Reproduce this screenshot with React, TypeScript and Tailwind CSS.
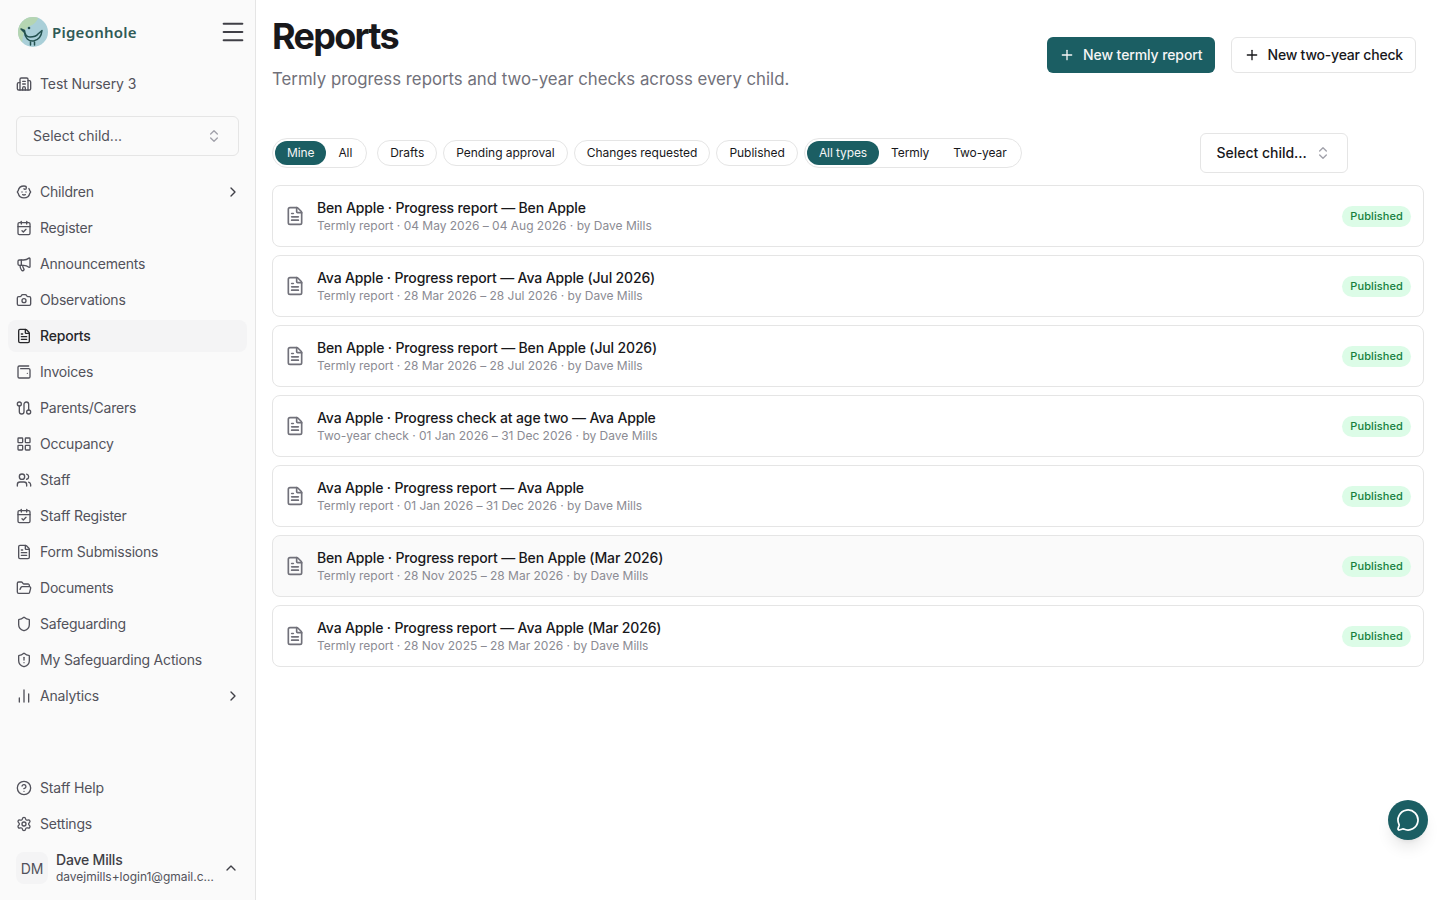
import {
  Baby,
  Building2,
  CalendarCheck,
  ChartNoAxesColumn,
  ChevronRight,
  ChevronUp,
  ChevronsUpDown,
  CircleHelp,
  FileText,
  FolderOpen,
  LayoutGrid,
  Camera,
  Megaphone,
  Menu,
  MessageCircle,
  Plus,
  Route,
  Settings,
  Shield,
  ShieldAlert,
  Users,
  WalletMinimal,
} from "lucide-react";

const navItems = [
  { label: "Children", icon: Baby, arrow: true },
  { label: "Register", icon: CalendarCheck },
  { label: "Announcements", icon: Megaphone },
  { label: "Observations", icon: Camera },
  { label: "Reports", icon: FileText, active: true },
  { label: "Invoices", icon: WalletMinimal },
  { label: "Parents/Carers", icon: Route, turned: true },
  { label: "Occupancy", icon: LayoutGrid },
  { label: "Staff", icon: Users },
  { label: "Staff Register", icon: CalendarCheck },
  { label: "Form Submissions", icon: FileText },
  { label: "Documents", icon: FolderOpen },
  { label: "Safeguarding", icon: Shield },
  { label: "My Safeguarding Actions", icon: ShieldAlert },
  { label: "Analytics", icon: ChartNoAxesColumn, arrow: true },
];

const reports = [
  { title: "Ben Apple · Progress report — Ben Apple", meta: "Termly report · 04 May 2026 – 04 Aug 2026 · by Dave Mills" },
  { title: "Ava Apple · Progress report — Ava Apple (Jul 2026)", meta: "Termly report · 28 Mar 2026 – 28 Jul 2026 · by Dave Mills" },
  { title: "Ben Apple · Progress report — Ben Apple (Jul 2026)", meta: "Termly report · 28 Mar 2026 – 28 Jul 2026 · by Dave Mills" },
  { title: "Ava Apple · Progress check at age two — Ava Apple", meta: "Two-year check · 01 Jan 2026 – 31 Dec 2026 · by Dave Mills" },
  { title: "Ava Apple · Progress report — Ava Apple", meta: "Termly report · 01 Jan 2026 – 31 Dec 2026 · by Dave Mills" },
  { title: "Ben Apple · Progress report — Ben Apple (Mar 2026)", meta: "Termly report · 28 Nov 2025 – 28 Mar 2026 · by Dave Mills", hover: true },
  { title: "Ava Apple · Progress report — Ava Apple (Mar 2026)", meta: "Termly report · 28 Nov 2025 – 28 Mar 2026 · by Dave Mills" },
];

function PigeonLogo() {
  return (
    <svg viewBox="0 0 32 32" className="h-[32px] w-[32px] shrink-0">
      <defs>
        <clipPath id="logo-clip">
          <circle cx="16" cy="16" r="15" />
        </clipPath>
      </defs>
      <circle cx="16" cy="16" r="15" fill="#a9cfd8" />
      <g clipPath="url(#logo-clip)">
        <path d="M0 0h22c-2 5-4 8-9 10S5 18 5 32H0z" fill="#b5d5b2" />
      </g>
      <path
        d="M4 13l3.500 1.500c.5 4 2 6.500 5.500 6.500 4 0 6.500-1 8-3l4-3.500c-.5 5-3.500 9.500-8.500 10.500-5 .5-8.500-3-9-8.500z"
        fill="none"
        stroke="#23514f"
        strokeWidth="1.500"
        strokeLinejoin="round"
      />
      <circle cx="12" cy="12" r="1.300" fill="#23514f" />
      <path d="M13.500 26v3M17.500 26v3" stroke="#23514f" strokeWidth="1.500" strokeLinecap="round" />
    </svg>
  );
}

function Sidebar() {
  return (
    <aside className="flex h-screen w-[256px] shrink-0 flex-col border-r border-[#e5e5e5] bg-[#fafafa] text-[#52525b]">
      <div className="flex h-[64px] items-center justify-between pr-[8px] pl-[17px]">
        <div className="flex items-center gap-[3px]">
          <PigeonLogo />
          <span className="font-['Noto_Sans',sans-serif] text-[15px] font-semibold tracking-[0.25px] text-[#2f5a56]">Pigeonhole</span>
        </div>
        <Menu className="h-[28px] w-[28px] text-[#3f3f46]" strokeWidth={1.75} />
      </div>
      <div className="flex h-[40px] items-center gap-[8px] px-[16px] tracking-[-0.1px]">
        <Building2 className="h-[16px] w-[16px]" />
        <span className="pb-[2px] text-[14px]">Test Nursery 3</span>
      </div>
      <div className="mx-[16px] mt-[12px] flex h-[40px] items-center justify-between rounded-[6px] border border-[#e5e5e5] px-[16px] text-[14px]">
        <span className="pb-[2px]">Select child...</span>
        <ChevronsUpDown className="h-[16px] w-[16px] text-[#a1a1aa]" />
      </div>
      <nav className="mt-[20px] flex flex-col px-[8px]">
        {navItems.map((item) => {
          const Icon = item.icon;
          return (
            <div
              key={item.label}
              className={`flex h-[32px] items-center gap-[8px] rounded-[8px] pr-[6px] pl-[8px] text-[14px] tracking-[-0.2px] [&:not(:last-child)]:mb-[4px] ${
                item.active ? "bg-[#f4f4f5] font-medium text-[#27272a]" : ""
              }`}
            >
              <Icon className={`h-[16px] w-[16px] shrink-0 ${item.turned ? "rotate-90" : ""}`} />
              <span className="flex-1 pb-[2px]">{item.label}</span>
              {item.arrow && <ChevronRight className="h-[16px] w-[16px] text-[#3f3f46]" />}
            </div>
          );
        })}
      </nav>
      <div className="mt-auto flex flex-col gap-[4px] px-[8px] tracking-[-0.2px]">
        <div className="flex h-[32px] items-center gap-[8px] px-[8px] text-[14px]">
          <CircleHelp className="h-[16px] w-[16px]" />
          <span className="pb-[2px]">Staff Help</span>
        </div>
        <div className="flex h-[32px] items-center gap-[8px] px-[8px] text-[14px]">
          <Settings className="h-[16px] w-[16px]" />
          <span className="pb-[2px]">Settings</span>
        </div>
      </div>
      <div className="mt-[12px] mb-[16px] flex h-[32px] items-center pr-[16px] pl-[16px]">
        <div className="flex h-[32px] w-[32px] shrink-0 items-center justify-center rounded-[8px] bg-[#f4f4f5] text-[14px]">DM</div>
        <div className="ml-[8px] min-w-0 flex-1 leading-none">
          <div className="truncate text-[14px] leading-[16px] font-medium tracking-[-0.2px] text-[#3f3f46]">Dave Mills</div>
          <div className="mt-[1px] truncate text-[12px] leading-[16px] tracking-[-0.02px]">davejmills+login1@gmail.com</div>
        </div>
        <ChevronUp className="ml-[9px] h-[16px] w-[16px] shrink-0 text-[#3f3f46]" />
      </div>
    </aside>
  );
}

function Segmented({ items, className }: { items: string[]; className: string }) {
  return (
    <div className={`flex h-[30px] items-center rounded-full border border-[#e5e5e5] px-[2px] ${className}`}>
      {items.map((label, i) => (
        <span
          key={label}
          className={`flex h-[24px] items-center rounded-full px-[12px] text-[12px] tracking-[-0.1px] ${
            i === 0 ? "bg-[#1b5e63] text-[#f5f5f5]" : "text-[#18181b]"
          }`}
        >
          {label}
        </span>
      ))}
    </div>
  );
}

function Chip({ label }: { label: string }) {
  return (
    <span className="flex h-[26px] items-center rounded-full border border-[#e5e5e5] px-[12px] text-[12px] tracking-[-0.02px] text-[#18181b]">
      {label}
    </span>
  );
}

function ReportRow({ title, meta, hover }: { title: string; meta: string; hover?: boolean }) {
  return (
    <div className={`flex h-[62px] items-center rounded-[8px] border border-[#e5e5e5] pr-[12px] pl-[12px] ${hover ? "bg-[#fafafa]" : "bg-white"}`}>
      <FileText className="h-[20px] w-[20px] shrink-0 text-[#71717a]" />
      <div className="ml-[12px] flex-1">
        <div className="text-[14px] leading-[20px] font-medium tracking-[-0.15px] text-[#18181b]">{title}</div>
        <div className="text-[12px] leading-[16px] tracking-[-0.01px] text-[#8b8b93]">{meta}</div>
      </div>
      <span className="flex h-[21px] items-center rounded-full bg-[#dcfce7] px-[8px] text-[11px] font-medium tracking-[0.1px] text-[#15803d]">
        Published
      </span>
    </div>
  );
}

export default function App() {
  return (
    <div className="flex h-screen overflow-hidden bg-white font-['Inter',sans-serif]">
      <Sidebar />
      <main className="flex-1 pt-[16px] pr-[16px] pl-[16px]">
        <header className="flex items-start justify-between">
          <div>
            <h1 className="text-[36px] leading-[40px] font-bold tracking-[-1.7px] text-[#18181b]">Reports</h1>
            <p className="mt-[9px] text-[16.8px] leading-[28px] text-[#71717a]">
              Termly progress reports and two-year checks across every child.
            </p>
          </div>
          <div className="mt-[21px] mr-[8px] flex gap-[16px]">
            <button className="flex h-[36px] items-center gap-[8px] rounded-[6px] bg-[#1b5e63] px-[12px] text-[14px] font-medium tracking-[-0.1px] text-[#f5f5f5]">
              <Plus className="h-[16px] w-[16px]" />
              <span className="pb-[2px]">New termly report</span>
            </button>
            <button className="flex h-[36px] items-center gap-[8px] rounded-[6px] border border-[#e5e5e5] bg-white px-[12px] text-[14px] font-medium tracking-[-0.2px] text-[#18181b]">
              <Plus className="h-[16px] w-[16px]" />
              <span className="pb-[2px]">New two-year check</span>
            </button>
          </div>
        </header>
        <div className="mt-[40px] flex h-[40px] items-center">
          <Segmented items={["Mine", "All"]} className="" />
          <div className="ml-[10px] flex gap-[6px]">
            <Chip label="Drafts" />
            <Chip label="Pending approval" />
            <Chip label="Changes requested" />
            <Chip label="Published" />
          </div>
          <Segmented items={["All types", "Termly", "Two-year"]} className="ml-[6px]" />
          <div className="ml-[178px] flex h-[40px] items-center gap-[8px] rounded-[6px] border border-[#e5e5e5] px-[16px] text-[14px] font-medium tracking-[-0.03px] text-[#18181b]">
            <span className="pb-[2px]">Select child...</span>
            <ChevronsUpDown className="h-[16px] w-[16px] text-[#a1a1aa]" />
          </div>
        </div>
        <div className="mt-[12px] flex flex-col gap-[8px]">
          {reports.map((r) => (
            <ReportRow key={r.title} title={r.title} meta={r.meta} hover={r.hover} />
          ))}
        </div>
      </main>
      <button className="fixed right-[12px] bottom-[60px] flex h-[40px] w-[40px] items-center justify-center rounded-full bg-[#1b5e63] shadow-lg">
        <MessageCircle className="h-[24px] w-[24px] text-white" strokeWidth={1.75} />
      </button>
    </div>
  );
}
